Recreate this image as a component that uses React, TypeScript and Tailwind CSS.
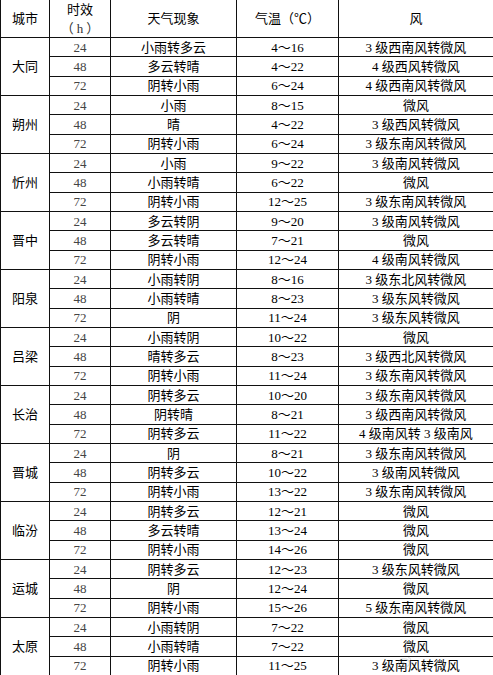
import React from "react";

type Row = [string, string, string, string];

const data: { city: string; rows: Row[] }[] = [
  {
    city: "大同",
    rows: [
      ["24", "小雨转多云", "4～16", "3 级西南风转微风"],
      ["48", "多云转晴", "4～22", "4 级西风转微风"],
      ["72", "阴转小雨", "6～24", "4 级西南风转微风"],
    ],
  },
  {
    city: "朔州",
    rows: [
      ["24", "小雨", "8～15", "微风"],
      ["48", "晴", "4～22", "3 级西风转微风"],
      ["72", "阴转小雨", "6～24", "3 级东南风转微风"],
    ],
  },
  {
    city: "忻州",
    rows: [
      ["24", "小雨", "9～22", "3 级南风转微风"],
      ["48", "小雨转晴", "6～22", "微风"],
      ["72", "阴转小雨", "12～25", "3 级东南风转微风"],
    ],
  },
  {
    city: "晋中",
    rows: [
      ["24", "多云转阴", "9～20", "3 级南风转微风"],
      ["48", "多云转晴", "7～21", "微风"],
      ["72", "阴转小雨", "12～24", "4 级南风转微风"],
    ],
  },
  {
    city: "阳泉",
    rows: [
      ["24", "小雨转阴", "8～16", "3 级东北风转微风"],
      ["48", "小雨转晴", "8～23", "3 级东风转微风"],
      ["72", "阴", "11～24", "3 级东风转微风"],
    ],
  },
  {
    city: "吕梁",
    rows: [
      ["24", "小雨转阴", "10～22", "微风"],
      ["48", "晴转多云", "8～23", "3 级西北风转微风"],
      ["72", "阴转小雨", "11～24", "3 级东南风转微风"],
    ],
  },
  {
    city: "长治",
    rows: [
      ["24", "阴转多云", "10～20", "3 级东南风转微风"],
      ["48", "阴转晴", "8～21", "3 级西南风转微风"],
      ["72", "阴转多云", "11～22", "4 级南风转 3 级南风"],
    ],
  },
  {
    city: "晋城",
    rows: [
      ["24", "阴", "8～21", "3 级东南风转微风"],
      ["48", "阴转多云", "10～22", "3 级南风转微风"],
      ["72", "阴转小雨", "13～22", "3 级东南风转微风"],
    ],
  },
  {
    city: "临汾",
    rows: [
      ["24", "阴转多云", "12～21", "微风"],
      ["48", "多云转晴", "13～24", "微风"],
      ["72", "阴转小雨", "14～26", "微风"],
    ],
  },
  {
    city: "运城",
    rows: [
      ["24", "阴转多云", "12～23", "3 级东风转微风"],
      ["48", "阴", "12～24", "微风"],
      ["72", "阴转小雨", "15～26", "5 级东南风转微风"],
    ],
  },
  {
    city: "太原",
    rows: [
      ["24", "小雨转阴", "7～22", "微风"],
      ["48", "小雨转晴", "7～22", "微风"],
      ["72", "阴转小雨", "11～25", "3 级南风转微风"],
    ],
  },
];

const cell = "bg-white flex items-center justify-center leading-none";

export default function App() {
  return (
    <div
      className="relative w-[493px] h-[675px] overflow-hidden bg-white text-[13px] text-black"
      style={{ fontFamily: '"Liberation Serif", "Noto Sans CJK SC", serif' }}
    >
      <div className="grid h-[675px] w-[520px] grid-cols-[48px_60px_125px_101px_181px] grid-rows-[37px_repeat(33,1fr)] gap-px bg-[#111] pl-px">
        {/* Header */}
        <div className={cell}>城市</div>
        <div className={`${cell} flex-col gap-[5px]`}>
          <span>时效</span>
          <span className="text-[#333]">
            <span className="font-['Noto_Sans_CJK_SC',sans-serif]">（</span>
            <span className="mx-[3px]">h</span>
            <span className="font-['Noto_Sans_CJK_SC',sans-serif]">）</span>
          </span>
        </div>
        <div className={cell}>天气现象</div>
        <div className={cell}>气温（℃）</div>
        <div className={`${cell} pr-[27px]`}>风</div>

        {data.map((group, gi) => (
          <React.Fragment key={group.city}>
            <div
              className={cell}
              style={{ gridRow: `${2 + gi * 3} / span 3`, gridColumn: 1 }}
            >
              {group.city}
            </div>
            {group.rows.map((r, ri) => (
              <React.Fragment key={ri}>
                <div
                  className={`${cell} text-[#444]`}
                  style={{ gridRow: 2 + gi * 3 + ri, gridColumn: 2 }}
                >
                  {r[0]}
                </div>
                <div
                  className={cell}
                  style={{ gridRow: 2 + gi * 3 + ri, gridColumn: 3 }}
                >
                  {r[1]}
                </div>
                <div
                  className={cell}
                  style={{ gridRow: 2 + gi * 3 + ri, gridColumn: 4 }}
                >
                  {r[2]}
                </div>
                <div
                  className={`${cell} pr-[27px]`}
                  style={{ gridRow: 2 + gi * 3 + ri, gridColumn: 5 }}
                >
                  {r[3]}
                </div>
              </React.Fragment>
            ))}
          </React.Fragment>
        ))}
      </div>

      {/* faint watermark mark */}
      <svg
        className="absolute left-[398px] top-[656px] opacity-30"
        width="14"
        height="12"
        viewBox="0 0 14 12"
      >
        <ellipse cx="6" cy="7" rx="5.5" ry="4.2" fill="none" stroke="#999" strokeWidth="1.2" />
        <circle cx="5.5" cy="7.3" r="1.6" fill="#999" />
        <path d="M10 1.5 a3 3 0 0 1 3 3" fill="none" stroke="#999" strokeWidth="1" />
      </svg>
    </div>
  );
}
